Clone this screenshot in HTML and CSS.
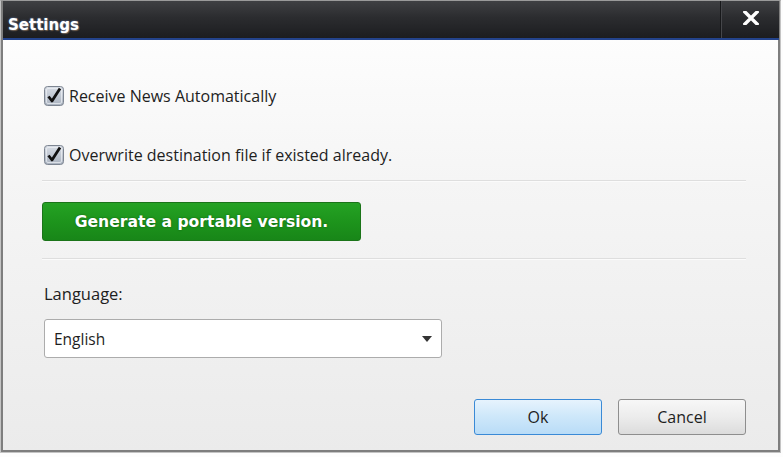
FILE: index.html
```html
<!DOCTYPE html>
<html>
<head>
<meta charset="utf-8">
<link rel="stylesheet" href="styles.css">
</head>
<body>
<div class="window">
  <div class="titlebar">
    <div class="title">Settings</div>
    <div class="close">
      <svg width="16" height="14" viewBox="0 0 16 14"><path d="M2 1 L14 13 M14 1 L2 13" stroke="#fff" stroke-width="3.4" stroke-linecap="square"/></svg>
    </div>
  </div>
  <div class="content">
    <label class="check first">
      <svg class="box" width="20" height="20" viewBox="0 0 20 20">
        <defs><linearGradient id="g1" x1="0" y1="0" x2="0" y2="1"><stop offset="0" stop-color="#d9dee6"/><stop offset="1" stop-color="#a9b2bf"/></linearGradient></defs>
        <rect x="0.5" y="0.5" width="19" height="19" rx="3" fill="url(#g1)" stroke="#7d8591"/>
        <rect x="2.5" y="2.5" width="15" height="15" rx="1.5" fill="none" stroke="#eef1f5" stroke-opacity="0.7"/>
        <path d="M4.5 10.5 L8 15 L16 2.5" fill="none" stroke="#111" stroke-width="2.8" stroke-linejoin="round"/>
      </svg>
      <span>Receive News Automatically</span>
    </label>
    <label class="check second">
      <svg class="box" width="20" height="20" viewBox="0 0 20 20">
        <defs><linearGradient id="g2" x1="0" y1="0" x2="0" y2="1"><stop offset="0" stop-color="#d9dee6"/><stop offset="1" stop-color="#a9b2bf"/></linearGradient></defs>
        <rect x="0.5" y="0.5" width="19" height="19" rx="3" fill="url(#g2)" stroke="#7d8591"/>
        <rect x="2.5" y="2.5" width="15" height="15" rx="1.5" fill="none" stroke="#eef1f5" stroke-opacity="0.7"/>
        <path d="M4.5 10.5 L8 15 L16 2.5" fill="none" stroke="#111" stroke-width="2.8" stroke-linejoin="round"/>
      </svg>
      <span>Overwrite destination file if existed already.</span>
    </label>
    <div class="sep sep1"></div>
    <button class="green">Generate a portable version.</button>
    <div class="sep sep2"></div>
    <div class="lang-label">Language:</div>
    <div class="select">
      <span>English</span>
      <svg width="10" height="6" viewBox="0 0 10 6"><path d="M0 0 H10 L5 6 Z" fill="#333"/></svg>
    </div>
    <div class="footer">
      <button class="btn ok">Ok</button>
      <button class="btn cancel">Cancel</button>
    </div>
  </div>
</div>
</body>
</html>
```
FILE: styles.css
```css
html, body {
  margin: 0;
  padding: 0;
  background: #fdfdfd;
}
body {
  width: 783px;
  height: 457px;
  overflow: hidden;
  font-family: "Open Sans", "DejaVu Sans", sans-serif;
}
.window {
  width: 781px;
  height: 453px;
  box-sizing: border-box;
  border: 1px solid #c4c4c4;
  border-top: 1px solid #9a9a9a;
  display: flex;
  flex-direction: column;
  box-shadow: inset 0 0 0 2px #7e7e7e;
  background: linear-gradient(#ffffff, #f5f5f5 40%, #ebebeb);
}
.titlebar {
  height: 37px;
  flex: none;
  background: linear-gradient(#3f4043, #2b2c2f 45%, #1c1d20);
  border-bottom: 2px solid #23438c;
  display: flex;
  align-items: center;
  justify-content: space-between;
  margin: 0 1px 0 2px;
}
.title {
  color: #fff;
  font-family: "DejaVu Sans", sans-serif;
  font-weight: bold;
  font-size: 15px;
  padding-left: 5px;
  padding-top: 11px;
  text-shadow: 0 0 2px rgba(120,170,255,0.7), 1px 1px 1px rgba(255,170,60,0.35);
}
.close {
  width: 59px;
  height: 37px;
  border-left: 1px solid #17181a;
  box-shadow: inset 1px 0 0 #45464a;
  display: flex;
  align-items: flex-start;
  justify-content: center;
  padding-top: 10px;
  box-sizing: border-box;
  padding-left: 2px;
}
.content {
  flex: 1;
  padding: 46px 32px 0 38px;
  display: flex;
  flex-direction: column;
  margin: 0 2px 2px 3px;
}
.check {
  display: flex;
  align-items: center;
  margin-left: 2px;
  height: 20px;
  font-size: 16px;
  color: #1e1e1e;
}
.check .box {
  margin-right: 5px;
  flex: none;
}
.check.second {
  margin-top: 39px;
}
.sep {
  height: 1px;
  background: #dedede;
  border-bottom: 1px solid #fbfbfb;
}
.sep1 { margin-top: 15px; }
.green {
  margin-top: 20px;
  width: 319px;
  height: 39px;
  border: 1px solid #1b7419;
  border-radius: 3px;
  background: linear-gradient(#25a224, #1d941c 50%, #188618);
  color: #fff;
  font-family: "DejaVu Sans", sans-serif;
  font-weight: bold;
  font-size: 15.6px;
  text-shadow: 0 0 2px rgba(0,60,0,0.6);
  padding: 0;
}
.sep2 { margin-top: 17px; }
.lang-label {
  margin-top: 24px;
  margin-left: 2px;
  font-size: 16.5px;
  color: #1e1e1e;
  line-height: 20px;
}
.select {
  margin-top: 15px;
  margin-left: 2px;
  width: 398px;
  height: 39px;
  box-sizing: border-box;
  border: 1px solid #acacac;
  border-radius: 3px;
  background: #fff;
  display: flex;
  align-items: center;
  justify-content: space-between;
  padding: 0 9px 0 9px;
  font-size: 15.5px;
  color: #1e1e1e;
}
.footer {
  margin-top: 41px;
  display: flex;
  justify-content: flex-end;
  gap: 16px;
}
.btn {
  width: 128px;
  height: 36px;
  border-radius: 3px;
  font-family: "Open Sans", sans-serif;
  font-size: 16px;
  color: #1e1e1e;
  padding: 0;
}
.ok {
  border: 1px solid #3a8ad6;
  background: linear-gradient(#e6f3fd, #cde7fa 50%, #b9dcf7);
}
.cancel {
  border: 1px solid #8e8e8e;
  background: linear-gradient(#f7f7f7, #ececec 50%, #dcdcdc);
}
```
